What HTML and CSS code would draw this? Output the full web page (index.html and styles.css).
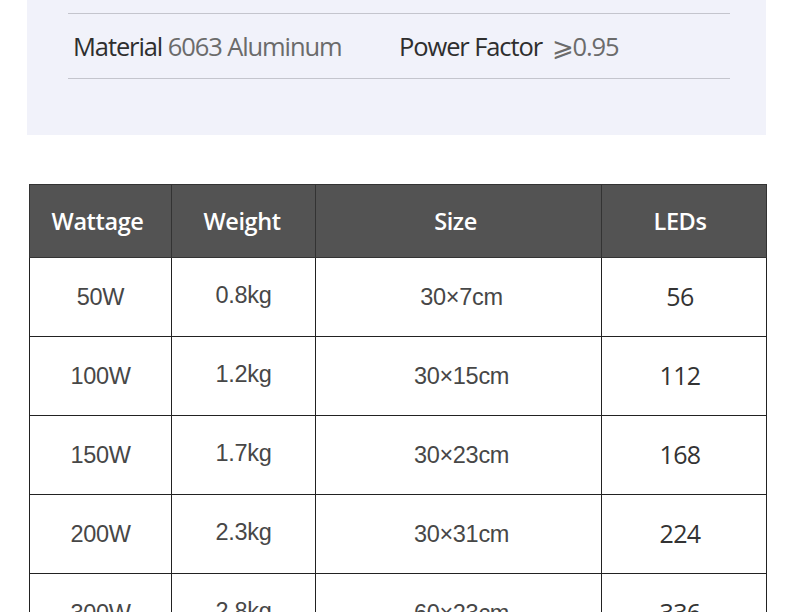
FILE: index.html
```html
<!DOCTYPE html>
<html>
<head>
<meta charset="utf-8">
<link rel="stylesheet" href="styles.css">
</head>
<body>
<div class="panel">
  <div class="spec-row">
    <div class="spec spec-a"><span class="label">Material</span> <span class="value">6063 Aluminum</span></div>
    <div class="spec spec-b"><span class="label">Power Factor</span> <span class="value">⩾0.95</span></div>
  </div>
</div>
<table class="specs">
  <colgroup>
    <col class="c1"><col class="c2"><col class="c3"><col class="c4">
  </colgroup>
  <thead>
    <tr><th class="h1">Wattage</th><th class="h2">Weight</th><th class="h3">Size</th><th class="h4">LEDs</th></tr>
  </thead>
  <tbody>
    <tr><td>50W</td><td class="up">0.8kg</td><td class="size">30×7cm</td><td class="leds">56</td></tr>
    <tr><td>100W</td><td class="up">1.2kg</td><td class="size">30×15cm</td><td class="leds">112</td></tr>
    <tr><td>150W</td><td class="up">1.7kg</td><td class="size">30×23cm</td><td class="leds">168</td></tr>
    <tr><td>200W</td><td class="up">2.3kg</td><td class="size">30×31cm</td><td class="leds">224</td></tr>
    <tr><td>300W</td><td class="up">2.8kg</td><td class="size">60×23cm</td><td class="leds">336</td></tr>
  </tbody>
</table>
</body>
</html>
```

FILE: styles.css
```css
html, body {
  margin: 0;
  padding: 0;
  background: #ffffff;
  overflow: hidden;
}
body {
  width: 790px;
  height: 612px;
}
.panel {
  margin-left: 27px;
  width: 739px;
  height: 135px;
  background: #f1f2fa;
  padding: 13px 36px 0 41px;
  box-sizing: border-box;
}
.spec-row {
  border-top: 1px solid #c4c5cd;
  border-bottom: 1px solid #c4c5cd;
  height: 64px;
  display: flex;
  align-items: center;
  font-family: "Open Sans", sans-serif;
  font-size: 25.5px;
  letter-spacing: -1.1px;
}
.spec-a {
  padding-left: 5px;
  width: 326px;
}
.spec-b .value {
  margin-left: 4px;
}
.label { color: #2e2e2e; }
.value { color: #6b6b6b; }
.specs {
  margin-top: 49px;
  margin-left: 29px;
  width: 737px;
  border-collapse: collapse;
  table-layout: fixed;
}
.c1 { width: 142px; }
.c2 { width: 144px; }
.c3 { width: 286px; }
.c4 { width: 165px; }
.specs th {
  background: #535353;
  color: #ffffff;
  height: 72px;
  padding: 0;
  border: 1px solid #333;
  font-family: "Open Sans", sans-serif;
  font-weight: 600;
  font-size: 23.5px;
  letter-spacing: -0.4px;
}
.specs th.h1 { padding-right: 6px; }
.specs th.h2 { padding-right: 3px; }
.specs th.h3 { padding-right: 6px; }
.specs th.h4 { padding-right: 8px; }
.specs td {
  height: 78px;
  padding: 0;
  border: 1px solid #222;
  text-align: center;
  font-family: "Liberation Sans", Arial, sans-serif;
  font-size: 23.5px;
  letter-spacing: -0.3px;
  color: #474747;
}
.specs td.up {
  height: 74px;
  padding-bottom: 4px;
}
.specs td.size {
  padding-left: 6px;
}
.specs td.leds {
  font-family: "Open Sans", sans-serif;
  font-size: 25px;
  color: #333;
  letter-spacing: -0.6px;
  padding-right: 8px;
  padding-bottom: 3px;
  height: 75px;
}
```
